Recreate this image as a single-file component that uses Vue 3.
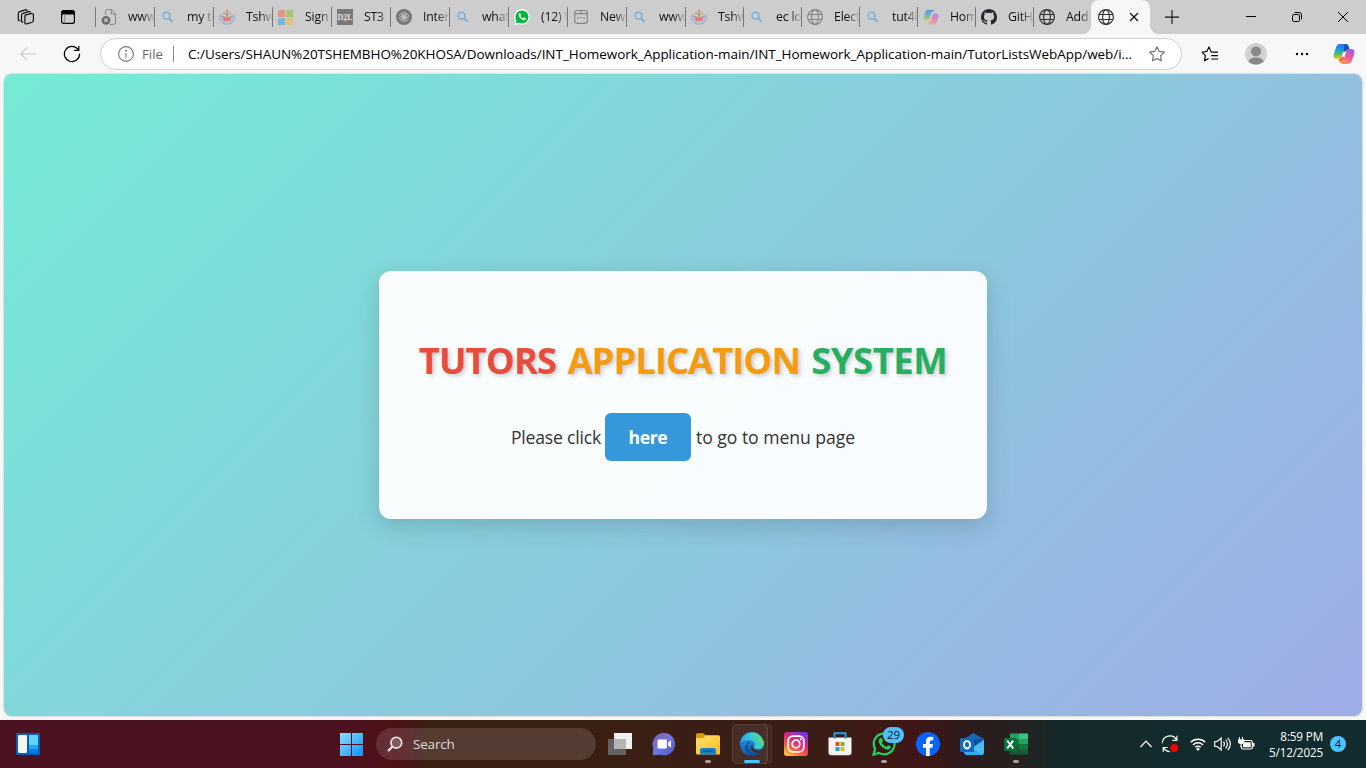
<script setup>
const tabs = [
  { icon: 'dead', title: 'www.' },
  { icon: 'search', title: 'my tut' },
  { icon: 'tut', title: 'Tshwa' },
  { icon: 'ms', title: 'Sign' },
  { icon: 'd2l', title: 'ST3' },
  { icon: 'gpt', title: 'Intern' },
  { icon: 'search', title: 'what i' },
  { icon: 'wa', title: '(12) W' },
  { icon: 'newtab', title: 'New t' },
  { icon: 'search', title: 'www.' },
  { icon: 'tut', title: 'Tshwa', narrow: true },
  { icon: 'search', title: 'ec log', narrow: true },
  { icon: 'globe', title: 'Electr', narrow: true },
  { icon: 'search', title: 'tut4li', narrow: true },
  { icon: 'copilot', title: 'Home', narrow: true },
  { icon: 'github', title: 'GitHu', narrow: true },
  { icon: 'globedark', title: 'Add', narrow: true },
]
</script>

<template>
  <div class="screen">
    <svg class="defs" width="0" height="0">
      <defs>
        <linearGradient id="cpA" x1="0" y1="0" x2="0" y2="1"><stop offset="0" stop-color="#2f6df0" /><stop offset=".4" stop-color="#14a0dc" /><stop offset=".7" stop-color="#5cbf62" /><stop offset="1" stop-color="#f5c81c" /></linearGradient>
        <linearGradient id="cpB" x1=".6" y1="0" x2=".3" y2="1"><stop offset="0" stop-color="#a45be8" /><stop offset=".5" stop-color="#ee5a9a" /><stop offset="1" stop-color="#ff9a4c" /></linearGradient>
        <linearGradient id="winG" x1="0" y1="0" x2="1" y2="1"><stop offset="0" stop-color="#8be0ff" /><stop offset="1" stop-color="#0a94fb" /></linearGradient>
        <linearGradient id="igG" x1=".1" y1="1" x2=".7" y2="0"><stop offset="0" stop-color="#ffd14a" /><stop offset=".3" stop-color="#fb6a32" /><stop offset=".6" stop-color="#e02b78" /><stop offset="1" stop-color="#7a36d8" /></linearGradient>
        <linearGradient id="foldG" x1="0" y1="0" x2="1" y2="1"><stop offset="0" stop-color="#ffdf70" /><stop offset="1" stop-color="#fcbd20" /></linearGradient>
        <linearGradient id="edgeA" x1="0" y1=".6" x2="1" y2=".2"><stop offset="0" stop-color="#25a5e8" /><stop offset=".5" stop-color="#35c6d8" /><stop offset="1" stop-color="#6be052" /></linearGradient>
        <linearGradient id="edgeB" x1="0" y1="0" x2="0" y2="1"><stop offset="0" stop-color="#25a0e4" /><stop offset="1" stop-color="#0c5cb8" /></linearGradient>
        <linearGradient id="chatG" x1="0" y1="0" x2="1" y2="1"><stop offset="0" stop-color="#8b5aa9" /><stop offset=".5" stop-color="#6f78dc" /><stop offset="1" stop-color="#4e55c6" /></linearGradient>
      </defs>
    </svg>

    <header class="strip">
      <div class="cell strip-first">
        <svg width="18" height="18" viewBox="0 0 18 18" fill="none" stroke="#111" stroke-width="1.2" stroke-linejoin="round" stroke-linecap="round">
          <path d="M8 7.2 14.2 5.6Q16.4 5.2 16.4 7V12.3Q16.4 13.8 15 14.3L9.8 15.9Q7.8 16.4 7.8 14.4Z" />
          <path d="M5.8 14.2Q4.5 14.4 4.5 12.5V7.4Q4.5 5.8 6 5.3L11.5 3.7Q13 3.4 13.4 4.2" />
          <path d="M2.8 12.6Q1.3 12.8 1.3 10.9V5.6Q1.3 4 2.8 3.6L8.2 1.9Q9.8 1.6 10.2 2.5" />
        </svg>
      </div>
      <div class="cell">
        <svg width="16" height="16" viewBox="0 0 16 16"><rect x="1.6" y="1.6" width="12.8" height="12.8" rx="2.2" fill="none" stroke="#000" stroke-width="1.2" /><path d="M1.5 5.6V3.2Q1.5 1.2 3.5 1.2H12.5Q14.5 1.2 14.5 3.2V5.6Z" /><path d="M4.7 5V14.4" stroke="#888" /></svg>
      </div>
      <div class="tabs">
        <div v-for="(t, i) in tabs" :key="i" class="tab" :class="{ narrow: t.narrow }">
          <span class="fav">
            <svg v-if="t.icon === 'dead'" width="16" height="16" viewBox="0 0 16 16" fill="none" stroke="#858585"><path d="M4.5 5.5V2.5Q4.5 .6 6.3 .6H10.5L14.5 4.6V13.5Q14.5 15.4 12.5 15.4H9M10.3 .8V5H14.4" /><circle cx="5" cy="11.3" r="4.4" fill="#6c6c6c" stroke="none" /><path d="M3.4 9.7 6.6 12.9M6.6 9.7 3.4 12.9" stroke="#ddd" stroke-width="1.1" /></svg>
            <svg v-else-if="t.icon === 'search'" width="16" height="16" viewBox="0 0 16 16" fill="none" stroke="#73aee0" stroke-width="1.5"><circle cx="6.5" cy="6.7" r="3.4" /><path d="M9 9.2 12.7 12.9" stroke-width="1.8" /></svg>
            <svg v-else-if="t.icon === 'tut'" width="16" height="16" viewBox="0 0 16 16" fill="none"><path d="M1.8 4.6A7.1 7.1 0 1 0 14.2 4.6" stroke="#a3b1cb" stroke-width="1.5" /><path d="M3.4 7A4.9 4.9 0 1 0 12.6 7" stroke="#bdc6d6" stroke-width="1" /><rect x="4.3" y="7.8" width="7.4" height="4.4" rx="1" fill="#e27070" /><path d="M6.6 8V12M9.4 8V12" stroke="#ddb7bd" stroke-width=".6" /><circle cx="8" cy="1.9" r="1.5" fill="#dc8a86" /><circle cx="5.1" cy="4.6" r="1.5" fill="#dfb66a" /><circle cx="10.9" cy="4.6" r="1.5" fill="#dfb66a" /><circle cx="8" cy="5.5" r="1.4" fill="#8191c1" /><circle cx="3.4" cy="7.4" r="1" fill="#8191c1" /><circle cx="12.6" cy="7.4" r="1" fill="#8191c1" /></svg>
            <svg v-else-if="t.icon === 'ms'" width="16" height="16" viewBox="0 0 16 16"><path fill="#e29681" d="M0 1H7V8H0Z" /><path fill="#acc479" d="M8 1H15V8H8Z" /><path fill="#77b9da" d="M0 9H7V16H0Z" /><path fill="#e3c574" d="M8 9H15V16H8Z" /></svg>
            <svg v-else-if="t.icon === 'd2l'" width="16" height="16" viewBox="0 0 16 16"><path fill="#777" d="M0 0H16V16H0Z" /><text x="8" y="10.5" text-anchor="middle" class="d2l">D2L</text><path fill="#e7905d" d="M6 11.4H10V12.4H6Z" /></svg>
            <svg v-else-if="t.icon === 'gpt'" width="16" height="16" viewBox="0 0 16 16" fill="none"><circle cx="8" cy="8" r="8" fill="#777" /><g stroke="#c6c6c6" stroke-width=".75"><rect v-for="a in 6" :key="a" x="6.6" y="3.2" width="3.7" height="5.4" rx="1.7" :transform="`rotate(${a * 60} 8 8)`" /></g></svg>
            <svg v-else-if="t.icon === 'wa'" width="16" height="16" viewBox="0 0 16 16"><path d="M.3 16 1.2 11.8A7.8 7.8 0 1 1 4.8 15Z" fill="#fff" /><path d="M1.8 14.5 2.5 11.5A6.5 6.5 0 1 1 5.1 13.8Z" fill="#00b93e" /><path d="M5.2 4.5Q6.2 3.7 6.6 4.7L7 5.8Q7.1 6.3 6.4 6.9 7.3 8.7 9.1 9.4 9.9 8.3 10.4 8.6L11.6 9.2Q12 9.5 11.5 10.4 10.6 11.6 8.7 10.9 5.7 9.7 4.7 6.9 4.2 5.4 5.2 4.5Z" fill="#fff" /></svg>
            <svg v-else-if="t.icon === 'newtab'" width="16" height="16" viewBox="0 0 16 16" fill="none" stroke="#858585" stroke-width="1.2"><rect x="1.7" y="1.5" width="12.6" height="12.8" rx="2.2" /><path d="M1.7 4.7H7.8V1.7M8 4.7H14.3" /><path d="M4.2 8.8H5.8M7.2 8.8H8.8M10.2 8.8H11.8" stroke-width="1.6" /></svg>
            <svg v-else-if="t.icon === 'copilot'" class="faded" width="16" height="16" viewBox="0 0 24 24"><path d="M17 4Q16.4 1 13.6 1H7.2Q4.6 1 3.6 4L.8 12.4Q-.4 17.2 4 17.4H7.2Q8.8 17.3 9.5 15L12.1 6.6Q12.9 4 15 4Z" fill="url(#cpA)" /><path d="M7 20Q7.7 23 10.4 23H16.8Q19.4 23 20.4 20L23.2 11.6Q24.4 6.8 20 6.6H16.8Q15.2 6.7 14.5 9L11.9 17.4Q11.1 20 9 20Z" fill="url(#cpB)" /></svg>
            <svg v-else-if="t.icon === 'github'" width="16" height="16" viewBox="0 0 16 16"><path fill="#24292f" d="M8 0C3.58 0 0 3.58 0 8c0 3.54 2.29 6.53 5.47 7.59.4.07.55-.17.55-.38 0-.19-.01-.82-.01-1.49-2.01.37-2.53-.49-2.69-.94-.09-.23-.48-.94-.82-1.13-.28-.15-.68-.52-.01-.53.63-.01 1.08.58 1.23.82.72 1.21 1.87.87 2.33.66.07-.52.28-.87.51-1.07-1.78-.2-3.64-.89-3.64-3.95 0-.87.31-1.59.82-2.15-.08-.2-.36-1.02.08-2.12 0 0 .67-.21 2.2.82a7.6 7.6 0 0 1 4 0c1.53-1.04 2.2-.82 2.2-.82.44 1.1.16 1.92.08 2.12.51.56.82 1.27.82 2.15 0 3.07-1.87 3.75-3.65 3.95.29.25.54.73.54 1.48 0 1.07-.01 1.93-.01 2.2 0 .21.15.46.55.38A8 8 0 0 0 16 8c0-4.42-3.58-8-8-8Z" /></svg>
            <svg v-else width="16" height="16" viewBox="0 0 16 16" fill="none" stroke-width="1.15" :stroke="t.icon === 'globe' ? '#858585' : '#333'"><circle cx="8" cy="8" r="7.4" /><ellipse cx="8" cy="8" rx="3.4" ry="7.4" /><path d="M1.2 5.5H14.8M1.2 10.5H14.8" /></svg>
          </span>
          <span class="tab-title">{{ t.title }}</span>
        </div>
      </div>
      <div class="active-tab">
        <svg width="16" height="16" viewBox="0 0 16 16" fill="none" stroke-width="1.15" stroke="#333"><circle cx="8" cy="8" r="7.4" /><ellipse cx="8" cy="8" rx="3.4" ry="7.4" /><path d="M1.2 5.5H14.8M1.2 10.5H14.8" /></svg>
        <svg width="10" height="10" viewBox="0 0 10 10" stroke="#111" stroke-width="1.3"><path d="M1 1 9 9M9 1 1 9" /></svg>
      </div>
      <div class="cell plus"><svg width="14" height="14" viewBox="0 0 14 14" stroke="#111" stroke-width="1.1"><path d="M7 0V14M0 7.1H14" /></svg></div>
      <div class="win">
        <span><svg width="10" height="10" viewBox="0 0 10 10" stroke="#000"><path d="M0 4.5H10" /></svg></span>
        <span><svg width="10" height="10" viewBox="0 0 10 10" fill="none" stroke="#000"><rect x=".5" y="2.5" width="7" height="7" rx="1.3" /><path d="M2.6 .5H7.3Q9.5 .6 9.5 2.8V7.4" /></svg></span>
        <span><svg width="10" height="10" viewBox="0 0 10 10" stroke="#000"><path d="M0 0 10 10M10 0 0 10" /></svg></span>
      </div>
    </header>

    <div class="toolbar">
      <svg class="back" width="16" height="14" viewBox="0 0 16 14" fill="none" stroke="#c9c9c9" stroke-width="1.1"><path d="M16 7H.8M7.3 .6.8 7 7.3 13.4" /></svg>
      <svg class="reload" width="18" height="18" viewBox="0 0 18 18" fill="none" stroke="#000" stroke-width="1.25" stroke-linecap="round"><path d="M16.6 9A7.6 7.6 0 1 1 14.9 4.2M15.8 1.3V5.3H11.6" /></svg>
      <div class="address">
        <svg width="16" height="16" viewBox="0 0 16 16" fill="none" stroke="#767676" stroke-width="1.1"><circle cx="8" cy="8" r="7.4" /><path d="M8 7V11.8" /><circle cx="8" cy="4.7" r=".5" fill="#767676" /></svg>
        <span class="scheme">File</span>
        <i class="bar"></i>
        <span class="url">C:/Users/SHAUN%20TSHEMBHO%20KHOSA/Downloads/INT_Homework_Application-main/INT_Homework_Application-main/TutorListsWebApp/web/i...</span>
        <svg class="star" width="16" height="16" viewBox="0 0 16 16" fill="none" stroke="#6e6e6e" stroke-width="1.1" stroke-linejoin="round"><path d="M8 .8 10.2 5.4 15.4 6.1 11.6 9.7 12.5 14.8 8 12.4 3.5 14.8 4.4 9.7 .6 6.1 5.8 5.4Z" /></svg>
      </div>
      <svg class="favs" width="18" height="16" viewBox="0 0 18 16" fill="none" stroke="#000" stroke-width="1.15" stroke-linejoin="round"><path d="M10.2 6.1 8 .9 5.8 5.4 1 6.2 4.4 9.7 3.5 14.8 7.6 12.5M10.2 6.1H17M10.2 9.6H17M10.2 13H17" /></svg>
      <svg class="avatar" width="22" height="22" viewBox="0 0 22 22"><circle cx="11" cy="11" r="11" fill="#d2d0ce" /><circle cx="11" cy="8.4" r="5" fill="#8a8886" /><path d="M3.3 18.3Q5 14.4 11 14.4T18.7 18.3A11 11 0 0 1 3.3 18.3Z" fill="#8a8886" /></svg>
      <svg class="more" width="14" height="4" viewBox="0 0 14 4"><circle cx="2" cy="2" r="1.2" /><circle cx="7" cy="2" r="1.2" /><circle cx="12" cy="2" r="1.2" /></svg>
      <svg class="pilot" width="22" height="22" viewBox="0 0 24 24"><path d="M17 4Q16.4 1 13.6 1H7.2Q4.6 1 3.6 4L.8 12.4Q-.4 17.2 4 17.4H7.2Q8.8 17.3 9.5 15L12.1 6.6Q12.9 4 15 4Z" fill="url(#cpA)" /><path d="M7 20Q7.7 23 10.4 23H16.8Q19.4 23 20.4 20L23.2 11.6Q24.4 6.8 20 6.6H16.8Q15.2 6.7 14.5 9L11.9 17.4Q11.1 20 9 20Z" fill="url(#cpB)" /><path d="M12.6 1.1Q16.4 1 17.2 4L18 6.6H16.8Q15.2 6.7 14.5 9L12 9.5 11.2 9.5Z" fill="#1850b8" /><path d="M7 20 6 17.4H7.2Q8.8 17.3 9.5 15L12.5 15 11.9 17.4Q11.1 20 9 20Z" fill="#f0693c" /></svg>
    </div>

    <main class="page">
      <section class="card">
        <h1><span class="red">TUTORS</span> <span class="orange">APPLICATION</span> <span class="green">SYSTEM</span></h1>
        <p><span class="lead">Please click</span><a class="button">here</a><span class="trail">to go to menu page</span></p>
      </section>
    </main>

    <footer class="taskbar">
      <svg class="widgets" width="24" height="22" viewBox="0 0 24 22"><rect width="24" height="22" rx="1" fill="#0d5fae" /><rect x="2" y="2" width="9" height="18" rx="1" fill="#f5f5f5" /><path fill="#64d3fc" d="M13 2H22V12H13Z" /><path fill="#22a6fb" d="M13 12H22V16H13Z" /><path fill="#0a7ce2" d="M13 16H22V20H13Z" /></svg>
      <svg class="start" width="23" height="23" viewBox="0 0 23 23" fill="url(#winG)"><path d="M0 0H11V11H0ZM12 0H23V11H12ZM0 12H11V23H0ZM12 12H23V23H12Z" /></svg>
      <div class="search">
        <svg width="16" height="16" viewBox="0 0 16 16" fill="none" stroke="#eee" stroke-width="1.6"><circle cx="9.3" cy="6.7" r="5.4" fill="#ffffff33" /><path d="M5.3 10.7 1 15" stroke-width="2" /></svg>
        <span>Search</span>
      </div>
      <div class="apps">
        <span class="app"><svg width="24" height="24" viewBox="0 0 24 24"><path fill="#f0f0f0" d="M6 1H24V17H6Z" /><path fill="#626262" d="M0 7H18V23H0Z" /><path fill="#b5b5b5" d="M6 7H18V17H6Z" /></svg></span>
        <span class="app"><svg width="24" height="24" viewBox="0 0 24 24"><path d="M.8 23.2 1.2 16A11.3 11.3 0 1 1 8 22.8Z" fill="url(#chatG)" /><rect x="5.5" y="7.5" width="9.3" height="9" rx="1.2" fill="#fff" /><path d="M16 10.8 19 8.2V15.8L16 13.2Z" fill="#fff" /></svg></span>
        <span class="app"><svg width="24" height="24" viewBox="0 0 24 24"><path d="M0 3Q0 1.3 1.6 1.3H7.6L10 3.6V7H0Z" fill="#dc9a0b" /><path d="M0 6H7.2L9.6 3.3H22.5Q24 3.4 24 5V22.6H1.6Q0 22.6 0 21Z" fill="url(#foldG)" /><path d="M4 22.6V18Q4 15.9 6 15.9H18Q20 15.9 20 18V22.6Z" fill="#1680c9" /><path d="M7.3 19.2H16.7" stroke="#075aa0" stroke-width="1.4" /></svg><i class="run"></i></span>
        <span class="app current"><svg width="24" height="24" viewBox="0 0 24 24"><circle cx="12" cy="12" r="11.9" fill="url(#edgeB)" /><path d="M.2 11A12 12 0 0 1 24 11.5Q24 16.5 18.3 16.9 14.3 17 13.9 15.3 15.8 13.3 14.3 11 11.8 7.4 6.8 8.2 2.2 8.9.2 11Z" fill="url(#edgeA)" /><path d="M11.2 9.2Q6.2 12 8.7 17 12.2 22.9 20.8 20.2 17 24.9 10.3 23.7 4 20.6 5.4 14.5 6.8 10 11.2 9.2Z" fill="#104f98" /><path d="M24 17 21.8 20.4 20.4 20.7Q14.7 22 11.7 18.7 9.2 15 12.2 12.6 12.7 18.6 18.9 18.5 21.6 18.2 24 15.5Z" fill="#4a2d26" /></svg><i class="run wide"></i></span>
        <span class="app"><svg width="24" height="24" viewBox="0 0 24 24"><rect width="24" height="24" rx="3" fill="url(#igG)" /><g fill="none" stroke="#fff" stroke-width="1.8"><rect x="4.2" y="4.2" width="15.6" height="15.6" rx="4.5" /><circle cx="12" cy="12" r="3.8" /></g><circle cx="16.7" cy="7.3" r="1.1" fill="#fff" /></svg></span>
        <span class="app"><svg width="24" height="24" viewBox="0 0 24 24"><path d="M6.5 7V1.2H17.5V7" stroke="#1ca6ea" stroke-width="2" fill="none" /><path d="M.5 5.5H23.5V20.5Q23.5 23.2 20.7 23.2H3.3Q.5 23.2 .5 20.5Z" fill="#f4f4f4" /><path d="M6.5 4.5V6.5M17.5 4.5V6.5" stroke="#0c7bbd" stroke-width="2" /><path fill="#eb4b25" d="M7.5 10H11.5V14H7.5Z" /><path fill="#7bb42d" d="M12.5 10H16.5V14H12.5Z" /><path fill="#18a2e8" d="M7.5 15H11.5V19H7.5Z" /><path fill="#f8b616" d="M12.5 15H16.5V19H12.5Z" /></svg></span>
        <span class="app"><svg width="24" height="24" viewBox="0 0 24 24"><path d="M1.5 22.6 3.1 16.9A10.4 10.4 0 1 1 7.1 20.9Z" fill="#351d16" stroke="#24cf62" stroke-width="2.2" /><path d="M7.9 6.2Q9.5 5.2 10.1 6.8L10.9 8.8Q11.1 9.5 9.8 10.7 11.5 13.9 14.4 14.9 15.7 13 16.4 13.2L18.7 14.4Q19 15 18.3 16.4 16.7 18.3 13.4 17 8.5 14.9 6.9 10.6 6 7.7 7.9 6.2Z" fill="#24cf62" /></svg><b class="count">29</b><i class="run"></i></span>
        <span class="app"><svg width="24" height="24" viewBox="0 0 24 24"><circle cx="12" cy="12" r="12" fill="#0866ff" /><path d="M10 24V15.7H7V12H10V9.5Q10 4.8 14.5 4.8L17.2 5V8.3H15.7Q13.7 8.3 13.7 10V12H17L16.4 15.7H13.7V24Z" fill="#fff" /></svg></span>
        <span class="app"><svg width="24" height="24" viewBox="0 0 24 24"><path d="M4 7 13.2 1.1 24 7V12L14 18 4 12Z" fill="#1766b9" /><path d="M24 8 12 16V23H21Q24 23 24 20Z" fill="#4bbcf1" /><path d="M13 7 23.5 7.5 12.5 15Z" fill="#0e4e9c" /><path d="M4 12 24 23H7Q4 23 4 20Z" fill="#36a9e7" /><rect y="6" width="14" height="14" rx="1" fill="#126bc0" /><ellipse cx="7" cy="12.8" rx="3" ry="3.7" fill="none" stroke="#fff" stroke-width="1.9" /></svg></span>
        <span class="app"><svg width="24" height="24" viewBox="0 0 24 24"><path fill="#21a366" d="M6 1.5H15V7H6Z" /><path fill="#36c481" d="M15 1.5H24V7H15Z" /><path fill="#107c41" d="M6 7H15V12.5H6Z" /><path fill="#21a366" d="M15 7H24V12.5H15Z" /><path fill="#185c37" d="M6 12.5H24V22.5H6Z" /><path fill="#107c41" d="M15 12.5H24V17.5H15Z" /><rect y="6" width="12.5" height="13" rx="1" fill="#0b7039" /><path d="M3.2 8.6 9.2 16.4M9.2 8.6 3.2 16.4" stroke="#fff" stroke-width="1.9" /></svg><i class="run"></i></span>
      </div>
      <div class="tray">
        <svg width="12" height="8" viewBox="0 0 12 8" fill="none" stroke="#fff" stroke-width="1.2"><path d="M.5 7 6 1.2 11.5 7" /></svg>
        <svg class="sync" width="18" height="18" viewBox="0 0 18 18" fill="none" stroke="#fff" stroke-width="1.15"><path d="M1.3 8.2A7.6 7.6 0 0 1 15.6 5M15.9 .8V5.3H11.3M9 16.6Q5 16.6 2.6 12.9M2.2 17V12.5H6.7" /><circle cx="13.3" cy="13" r="4" fill="#f50000" stroke="none" /></svg>
        <svg class="wifi" width="16" height="14" viewBox="0 0 16 14" fill="none" stroke="#fff" stroke-width="1.4"><path d="M.7 5.3A10.3 10.3 0 0 1 15.3 5.3M3 7.9A7 7 0 0 1 13 7.9M5.3 10.3A3.8 3.8 0 0 1 10.7 10.3" /><circle cx="8" cy="11.9" r="1.5" fill="#fff" stroke="none" /></svg>
        <svg class="sound" width="17" height="16" viewBox="0 0 17 16" fill="none" stroke="#fff" stroke-width="1.15"><path d="M.7 5.5H3.2L7.2 2V14L3.2 10.5H.7ZM9.5 5.7A3.5 3.5 0 0 1 9.5 10.3M11.6 3.7A6 6 0 0 1 11.6 12.3M13.7 1.8A8.7 8.7 0 0 1 13.7 14.2" /></svg>
        <svg class="battery" width="17" height="14" viewBox="0 0 17 14"><path d="M6 3.5H12.5Q14.3 3.5 14.3 5.2V10.2Q14.3 12 12.5 12H5Q3.3 12 3.3 10.2V8.5" fill="none" stroke="#fff" stroke-width="1.2" /><path d="M5.5 5.2H12.7V10.3H5V7.7Z" fill="#fff" /><path d="M15 6H16.5V9.4H15Z" fill="#fff" /><path d="M1.5 0V2.5M4.5 0V2.5M0 2.8H6V4.5Q6 6.5 3 6.5T0 4.5ZM3 6V10" fill="#fff" stroke="#fff" /></svg>
        <div class="clock"><span>8:59 PM</span><span>5/12/2025</span></div>
        <b class="notes">4</b>
      </div>
    </footer>
  </div>
</template>

<style>
body { margin: 0; overflow: hidden; }
</style>

<style scoped>
.screen { width: 1366px; height: 768px; display: flex; flex-direction: column; background: #f7f7f7; font-family: "Open Sans", "Noto Sans", sans-serif; color: #111; overflow: hidden; }
.screen svg { display: block; flex: none; }
.defs { position: absolute; }

.strip { height: 34px; flex: none; display: flex; background: #cdcdcd; }
.cell { width: 42px; display: flex; align-items: center; justify-content: center; }
.strip-first { padding-left: 5px; }
.tabs { display: flex; margin-left: 6px; width: 996px; flex: none; }
.tab { width: 59px; box-sizing: border-box; flex: none; display: flex; align-items: center; padding-left: 6px; position: relative; }
.tab.narrow { width: 58px; }
.tab::before { content: ""; position: absolute; left: 0; top: 7px; width: 1px; height: 20px; background: #777; }
.fav { width: 16px; flex: none; }
.faded { opacity: .6; }
.d2l { font: bold 8px "Liberation Serif", serif; fill: #e4e4e4; }
.tab-title { margin-left: 11px; flex: 1; overflow: hidden; white-space: nowrap; font-size: 12.3px; line-height: 18px; letter-spacing: -.2px; -webkit-mask-image: linear-gradient(to right, #000 55%, transparent 105%); mask-image: linear-gradient(to right, #000 55%, transparent 105%); }
.active-tab { width: 59px; flex: none; background: #f7f7f7; border-radius: 8px 8px 0 0; display: flex; align-items: center; gap: 15px; padding-left: 7px; box-sizing: border-box; position: relative; }
.active-tab::before, .active-tab::after { content: ""; position: absolute; bottom: 0; width: 8px; height: 8px; }
.active-tab::before { left: -8px; background: radial-gradient(circle at 0 0, transparent 7.5px, #f7f7f7 8px); }
.active-tab::after { right: -8px; background: radial-gradient(circle at 100% 0, transparent 7.5px, #f7f7f7 8px); }
.plus { width: 43px; }
.win { margin-left: auto; display: flex; }
.win span { width: 46px; display: flex; align-items: center; justify-content: center; }

.toolbar { height: 40px; flex: none; display: flex; align-items: center; }
.back { margin-left: 20px; }
.reload { margin-left: 27px; }
.address { margin-left: 19px; width: 1082px; height: 32px; box-sizing: border-box; border: 1px solid #d0d0d0; border-radius: 16px; background: #fff; display: flex; align-items: center; padding-left: 17px; flex: none; }
.scheme { margin-left: 8px; width: 31px; font-size: 13.3px; color: #666; line-height: 20px; }
.bar { width: 1px; height: 16px; background: #888; }
.url { margin-left: 14px; width: 961px; font-size: 13.5px; line-height: 20px; white-space: nowrap; color: #000; letter-spacing: -.04px; }
.favs { margin-left: 19px; }
.avatar { margin-left: 26px; }
.more { margin-left: 28px; }
.pilot { margin-left: 24px; }

.page { height: 642px; margin: 0 4px 4px; flex: none; border-radius: 8px; background: linear-gradient(135deg, #74ebd5, #9face6); box-shadow: 0 0 2px #0005; display: flex; align-items: center; justify-content: center; }
.card { width: 608px; height: 248px; box-sizing: border-box; padding-top: 64px; border-radius: 12px; background: rgba(255, 255, 255, .95); box-shadow: 0 8px 24px rgba(0, 0, 0, .15); display: flex; flex-direction: column; align-items: center; }
h1 { margin: 0; font-size: 36.5px; line-height: 50px; font-weight: 700; white-space: nowrap; letter-spacing: -.95px; word-spacing: 2.7px; text-shadow: 2px 2px 4px rgba(0, 0, 0, .2); }
.red { color: #e74c3c; }
.orange { color: #f39c12; letter-spacing: -1.05px; }
.green { color: #27ae60; letter-spacing: -.5px; }
p { margin: 28px 0 0; display: flex; align-items: center; font-size: 17.6px; color: #333; white-space: nowrap; }
.lead { letter-spacing: -.2px; }
.trail { letter-spacing: -.04px; }
.button { width: 86px; height: 48px; margin: 0 5px 0 4px; border-radius: 6px; background: #3498db; color: #fff; font-weight: 700; letter-spacing: -.4px; display: flex; align-items: center; justify-content: center; }

.taskbar { height: 48px; flex: none; display: flex; align-items: center; color: #fff; background: linear-gradient(90deg, #4b1222 0, #4a1120 330px, #4d1115 400px, #3b2015 430px, #3a1e15 800px, #401616 920px, #2b1b1c 970px, #252120 1020px, #14292c 1060px, #122c30 100%); }
.widgets { margin-left: 16px; }
.start { margin-left: 300px; }
.search { margin-left: 13px; width: 220px; height: 32px; border-radius: 16px; background: rgba(255, 255, 255, .13); display: flex; align-items: center; box-sizing: border-box; padding-left: 11px; gap: 10px; font-size: 13.5px; color: #ddd; letter-spacing: -.2px; }
.apps { display: flex; margin-left: 2px; }
.app { width: 44px; height: 48px; display: flex; align-items: center; justify-content: center; position: relative; }
.app svg { position: relative; }
.current::before { content: ""; position: absolute; left: 2px; top: 4px; width: 36px; height: 40px; box-sizing: border-box; border: 1px solid #ffffff18; border-radius: 5px; background: #ffffff12; }
.current::after { content: ""; position: absolute; left: 34px; top: 4px; width: 8px; height: 40px; box-sizing: border-box; border: 1px solid #ffffff18; border-left: 0; border-radius: 0 5px 5px 0; background: #ffffff08; }
.run { position: absolute; left: 19px; bottom: 5px; width: 6px; height: 3px; border-radius: 2px; background: #aaa09c; }
.run.wide { left: 14px; width: 16px; background: #4cc2ff; }
.count { position: absolute; left: 21px; top: 7px; width: 21px; height: 16px; border-radius: 8px; background: #4cc2ff; color: #111; font-weight: 400; font-size: 11.5px; line-height: 16px; text-align: center; }
.tray { margin-left: auto; margin-right: 20px; display: flex; align-items: center; }
.sync { margin-left: 9px; }
.wifi { margin-left: 11px; }
.sound { margin-left: 8px; }
.battery { margin-left: 7px; }
.clock { width: 67px; margin-left: 1px; display: flex; flex-direction: column; text-align: right; font-size: 11.7px; line-height: 16px; letter-spacing: -.15px; white-space: nowrap; }
.notes { width: 16px; height: 16px; margin-left: 7px; border-radius: 8px; background: #4cc2ff; color: #111; font-size: 11px; font-weight: 400; line-height: 16px; text-align: center; }
</style>
